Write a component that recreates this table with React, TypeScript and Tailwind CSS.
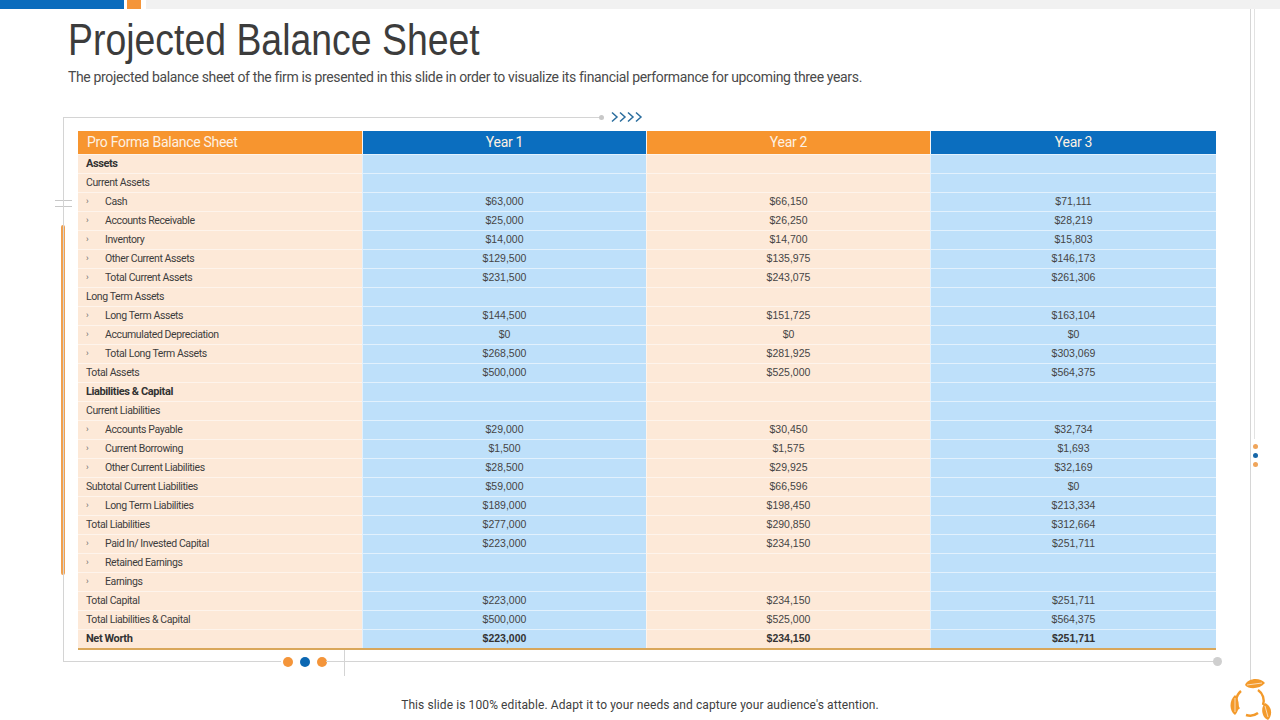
import React from "react";

type Row = {
  label: string;
  kind: "bold" | "head" | "sub";
  v?: string[];
};

const rows: Row[] = [
  { label: "Assets", kind: "bold" },
  { label: "Current Assets", kind: "head" },
  { label: "Cash", kind: "sub", v: ["$63,000", "$66,150", "$71,111"] },
  { label: "Accounts Receivable", kind: "sub", v: ["$25,000", "$26,250", "$28,219"] },
  { label: "Inventory", kind: "sub", v: ["$14,000", "$14,700", "$15,803"] },
  { label: "Other Current Assets", kind: "sub", v: ["$129,500", "$135,975", "$146,173"] },
  { label: "Total Current Assets", kind: "sub", v: ["$231,500", "$243,075", "$261,306"] },
  { label: "Long Term Assets", kind: "head" },
  { label: "Long Term Assets", kind: "sub", v: ["$144,500", "$151,725", "$163,104"] },
  { label: "Accumulated Depreciation", kind: "sub", v: ["$0", "$0", "$0"] },
  { label: "Total Long Term Assets", kind: "sub", v: ["$268,500", "$281,925", "$303,069"] },
  { label: "Total Assets", kind: "head", v: ["$500,000", "$525,000", "$564,375"] },
  { label: "Liabilities & Capital", kind: "bold" },
  { label: "Current Liabilities", kind: "head" },
  { label: "Accounts Payable", kind: "sub", v: ["$29,000", "$30,450", "$32,734"] },
  { label: "Current Borrowing", kind: "sub", v: ["$1,500", "$1,575", "$1,693"] },
  { label: "Other Current Liabilities", kind: "sub", v: ["$28,500", "$29,925", "$32,169"] },
  { label: "Subtotal Current Liabilities", kind: "head", v: ["$59,000", "$66,596", "$0"] },
  { label: "Long Term Liabilities", kind: "sub", v: ["$189,000", "$198,450", "$213,334"] },
  { label: "Total Liabilities", kind: "head", v: ["$277,000", "$290,850", "$312,664"] },
  { label: "Paid In/ Invested Capital", kind: "sub", v: ["$223,000", "$234,150", "$251,711"] },
  { label: "Retained Earnings", kind: "sub" },
  { label: "Earnings", kind: "sub" },
  { label: "Total Capital", kind: "head", v: ["$223,000", "$234,150", "$251,711"] },
  { label: "Total Liabilities & Capital", kind: "head", v: ["$500,000", "$525,000", "$564,375"] },
  { label: "Net Worth", kind: "bold", v: ["$223,000", "$234,150", "$251,711"] },
];

const Logo = () => (
  <svg width="46" height="46" viewBox="0 0 46 46">
    <g fill="none" stroke="#f39a2b" strokeWidth="2.4">
      <path d="M14 16 A13 13 0 0 0 12 34" />
      <path d="M19 40 A13 13 0 0 0 31 38" />
      <path d="M36 30 A13 13 0 0 0 31 15" />
    </g>
    <g fill="#f39a2b">
      <path d="M18 10 C21 3 33 2 38 8 C33 14 22 15 18 10 Z" />
      <path d="M8 20 C2 25 2 36 8 40 C13 35 13 25 8 20 Z" />
      <path d="M38 28 C45 31 46 40 41 45 C35 43 33 33 38 28 Z" />
    </g>
    <g stroke="#fde3c6" strokeWidth="0.9" fill="none">
      <path d="M20 10 L35 8" />
      <path d="M8 23 L8 37" />
      <path d="M38 31 L41 42" />
    </g>
  </svg>
);

export default function App() {
  return (
    <div
      className="relative w-[1280px] h-[720px] overflow-hidden bg-white text-[#404040]"
      style={{ fontFamily: "Roboto, 'Liberation Sans', sans-serif" }}
    >
      {/* top bar */}
      <div className="flex h-[9px]">
        <div className="w-[124px] bg-[#0b6cbd]" />
        <div className="w-[3px]" />
        <div className="w-[14px] bg-[#f4953a]" />
        <div className="w-[5px]" />
        <div className="flex-1 bg-[#f1f1f1]" />
      </div>

      {/* right rails */}
      <div className="absolute left-[1250px] top-[9px] h-[674px] w-px bg-[#d6d6d6]" />
      <div className="absolute left-[1254px] top-[9px] h-[430px] w-px bg-[#e2e2e2]" />
      <div className="absolute left-[1253px] top-[444px] flex flex-col gap-[4px]">
        <div className="h-[5px] w-[5px] rounded-full bg-[#f0a55a]" />
        <div className="h-[5px] w-[5px] rounded-full bg-[#1767a8]" />
        <div className="h-[5px] w-[5px] rounded-full bg-[#f0a55a]" />
      </div>

      {/* left decorations */}
      <div className="absolute left-[55px] top-[200px] h-px w-[17px] bg-[#c8c8c8]" />
      <div className="absolute left-[55px] top-[206px] h-px w-[17px] bg-[#c8c8c8]" />
      <div className="absolute left-[61px] top-[225px] h-[350px] w-[4px] rounded-full bg-[#f0a04f]" />

      {/* title */}
      <div className="pl-[68px] mt-[9px]">
        <h1 className="inline-block origin-left scale-x-[0.85] text-[44px] leading-[44px] text-[#3c3c3c] whitespace-nowrap"
          style={{ fontFamily: "'Liberation Sans', Arial, sans-serif" }}>
          Projected Balance Sheet
        </h1>
        <p className="mt-[5px] text-[14px] leading-[20px] tracking-[-0.35px] text-[#4a4a4a] whitespace-nowrap">
          The projected balance sheet of the firm is presented in this slide in order to visualize its financial performance for upcoming three years.
        </p>
      </div>

      {/* frame */}
      <div className="relative ml-[63px] mt-[30px] w-[1153px] border-l border-[#d4d4d4] pl-[14px] pt-[14px] pb-[12px]">
        {/* top decor */}
        <div className="absolute left-0 top-0 h-px w-[537px] bg-[#d4d4d4]" />
        <div className="absolute left-[535px] top-[-2px] h-[5px] w-[5px] rounded-full bg-[#c8c8c8]" />
        <svg className="absolute left-[546px] top-[-6px]" width="34" height="12" viewBox="0 0 34 12">
          {[0, 8, 16, 24].map((x) => (
            <polyline key={x} points={`${x + 2},1.5 ${x + 7},6 ${x + 2},10.5`} fill="none" stroke="#2a6d9e" strokeWidth="1.5" />
          ))}
        </svg>

        {/* table */}
        <div className="w-[1138px] border-b-2 border-[#d9a75a]">
          <div className="grid grid-cols-[284px_284px_284px_286px] h-[23px] text-[14px] leading-[23px] text-[#fdf1e3] tracking-[-0.3px]">
            <div className="bg-[#f7952f] pl-[9px]">Pro Forma Balance Sheet</div>
            <div className="bg-[#0b6ebf] border-l border-[#f5f5f5] text-center">Year 1</div>
            <div className="bg-[#f7952f] border-l border-[#f5f5f5] text-center">Year 2</div>
            <div className="bg-[#0b6ebf] border-l border-[#f5f5f5] text-center">Year 3</div>
          </div>
          {rows.map((r, i) => (
            <div key={i} className="grid grid-cols-[284px_284px_284px_286px] h-[19px]">
              <div className="flex items-center bg-[#fde9d8] border-t border-[#fef4ec] pl-[8px] text-[10.5px] tracking-[-0.4px] text-[#3d3d3d]">
                {r.kind === "sub" ? (
                  <>
                    <span className="w-[19px] text-[9px] text-[#6a6a6a]">›</span>
                    <span>{r.label}</span>
                  </>
                ) : (
                  <span className={r.kind === "bold" ? "font-bold text-[11px] text-[#333]" : ""}>{r.label}</span>
                )}
              </div>
              {[0, 1, 2].map((c) => (
                <div
                  key={c}
                  className={`flex items-center justify-center border-l border-t text-[10.5px] ${
                    c === 1 ? "bg-[#fde9d8] border-[#fef4ec]" : "bg-[#bee0fa] border-[#e2f1fd]"
                  } ${r.kind === "bold" ? "font-bold text-[#333]" : "text-[#454545]"}`}
                  style={{ fontFamily: "'Liberation Sans', Arial, sans-serif" }}
                >
                  {r.v ? r.v[c] : ""}
                </div>
              ))}
            </div>
          ))}
        </div>

        {/* bottom decor */}
        <div className="absolute left-0 bottom-0 h-px w-[217px] bg-[#d4d4d4]" />
        <div className="absolute left-[219px] bottom-[-5px] flex gap-[7px]">
          <div className="h-[10px] w-[10px] rounded-full bg-[#f4953a]" />
          <div className="h-[10px] w-[10px] rounded-full bg-[#0b67b2]" />
          <div className="h-[10px] w-[10px] rounded-full bg-[#f4953a]" />
        </div>
        <div className="absolute left-[262px] bottom-0 h-px w-[888px] bg-[#d4d4d4]" />
        <div className="absolute left-[280px] bottom-[-14px] h-[26px] w-px bg-[#d4d4d4]" />
        <div className="absolute left-[1149px] bottom-[-4px] h-[9px] w-[9px] rounded-full bg-[#cfcfcf]" />
      </div>

      {/* footer */}
      <p className="mt-[35px] text-center text-[12px] leading-[16px] text-[#404040] tracking-[0.1px]">
        This slide is 100% editable. Adapt it to your needs and capture your audience's attention.
      </p>

      <div className="absolute left-[1227px] top-[675px]">
        <Logo />
      </div>
    </div>
  );
}
